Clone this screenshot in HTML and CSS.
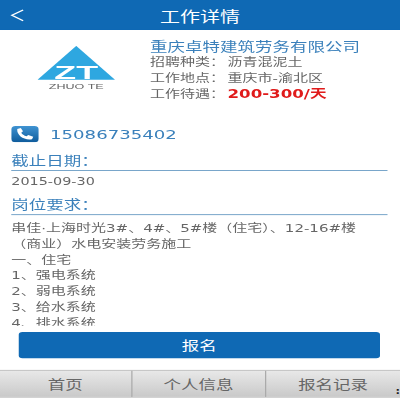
FILE: index.html
```html
<!DOCTYPE html>
<html lang="zh-CN">
<head>
  <meta charset="UTF-8">
  <meta name="viewport" content="width=device-width, initial-scale=1.0">
  <title>工作详情</title>
  <link rel="stylesheet" href="styles.css">
</head>
<body>
  <div class="frame">
    <div class="page">
      <div class="header">
        <svg class="back" width="14" height="16" viewBox="0 0 14 16"><path d="M11.5 2 L2.5 8 L11.5 14" fill="none" stroke="#fff" stroke-width="1.3"/></svg>
        <h1>工作详情</h1>
      </div>

      <div class="content">
        <div class="company">
          <svg class="logo" width="62" height="50" viewBox="0 0 62 50">
            <polygon points="31,0 62,37.5 0,37.5" fill="#2ea7e0"/>
            <text x="31" y="36.5" class="logo-zt" textLength="35" lengthAdjust="spacingAndGlyphs">ZT</text>
            <text x="31" y="48" class="logo-name" textLength="44" lengthAdjust="spacingAndGlyphs">ZHUO TE</text>
          </svg>
          <div class="company-info">
            <h2>重庆卓特建筑劳务有限公司</h2>
            <p>招聘种类：<span class="value">沥青混泥土</span></p>
            <p>工作地点：<span class="value">重庆市-渝北区</span></p>
            <p>工作待遇：<span class="value pay">200-300/天</span></p>
          </div>
        </div>

        <div class="phone">
          <svg class="phone-icon" width="22" height="18" viewBox="0 0 22 16" preserveAspectRatio="none">
            <defs>
              <linearGradient id="tile" x1="0" y1="0" x2="0" y2="1">
                <stop offset="0" stop-color="#3f93d2"/>
                <stop offset="1" stop-color="#0f5c9c"/>
              </linearGradient>
            </defs>
            <rect width="22" height="16" rx="3.5" fill="url(#tile)"/>
            <path d="M4.8 3 L7.6 2 L9.4 5.2 L8 6.6 C8.8 8.2 10.2 9.4 12.2 10 L13.6 8.8 L17.6 10.6 L16.6 13 C10.6 14.4 4.2 9.6 4.8 3 Z" fill="#fff"/>
          </svg>
          <span>15086735402</span>
        </div>

        <h3>截止日期：</h3>
        <p class="date">2015-09-30</p>
        <h3>岗位要求：</h3>
        <div class="desc">
          <p>串佳·上海时光3#、4#、5#楼（住宅）、12-16#楼</p>
          <p>（商业）水电安装劳务施工</p>
          <p>一、住宅</p>
          <p>1、强电系统</p>
          <p>2、弱电系统</p>
          <p>3、给水系统</p>
          <p>4、排水系统</p>
        </div>
      </div>

      <div class="action">
        <button type="button">报名</button>
      </div>

      <div class="tabs">
        <div class="tab">首页</div>
        <div class="tab">个人信息</div>
        <div class="tab">报名记录</div>
        <span class="edge-mark">:</span>
      </div>
    </div>
  </div>
</body>
</html>
```

FILE: styles.css
```css
* {
  box-sizing: border-box;
  margin: 0;
  padding: 0;
}

html,
body {
  height: 100%;
  overflow: hidden;
}

body {
  background: #fff;
  font-family: "DejaVu Sans", "Noto Sans CJK SC", sans-serif;
  color: #666;
}

.frame {
  width: 400px;
  height: 400px;
  overflow: hidden;
}

/* the shot is a phone page stretched wide and squeezed a little in height */
.page {
  width: 320px;
  height: 444px;
  display: flex;
  flex-direction: column;
  transform: scale(1.25, 0.9);
  transform-origin: 0 0;
  filter: blur(0.45px);
}

.header {
  height: 33.3px;
  flex: none;
  background: #0f69b4;
  display: flex;
  align-items: center;
  justify-content: center;
  position: relative;
}

.header h1 {
  font-size: 16px;
  font-weight: 400;
  color: #fff;
}

.back {
  position: absolute;
  left: 7px;
  top: 8.5px;
}

.content {
  height: 329px;
  flex: none;
  overflow: hidden;
  padding: 10.5px 10px 0 9px;
}

/* Company */
.company {
  display: flex;
  height: 94px;
}

.logo {
  margin: 7px 0 0 21px;
  flex: none;
}

.logo-zt {
  font-family: "Liberation Sans", sans-serif;
  font-size: 20px;
  font-weight: 700;
  fill: #fff;
  text-anchor: middle;
}

.logo-name {
  font-family: "Liberation Sans", sans-serif;
  font-size: 8px;
  fill: #666;
  text-anchor: middle;
}

.company-info {
  margin-left: 28px;
  font-size: 12px;
  line-height: 18px;
}

.company-info h2 {
  font-size: 14px;
  font-weight: 400;
  line-height: 16px;
  color: #3a80bb;
}

.value {
  margin-left: 2px;
}

.pay {
  font-size: 13.3px;
  font-weight: 700;
  color: #e01b1b;
}

/* Phone */
.phone {
  display: flex;
  align-items: center;
  gap: 9px;
  height: 22px;
  font-size: 14.5px;
  color: #3a80bb;
}

/* Sections */
h3 {
  font-size: 14px;
  font-weight: 400;
  line-height: 22px;
  height: 23px;
  margin-top: 7px;
  color: #3a80bb;
  border-bottom: 1px solid #6a9cc4;
}

.date {
  font-size: 11.5px;
  line-height: 25px;
}

.date + h3 {
  margin-top: 1px;
}

.desc {
  font-size: 12px;
  line-height: 17.55px;
  margin-top: 7px;
}

/* Button */
.action {
  flex: none;
  height: 48.7px;
  padding: 6.7px 16px 0 14.8px;
}

.action button {
  display: block;
  width: 100%;
  height: 28.9px;
  border: none;
  border-radius: 3px;
  background: #0f69b4;
  color: #fff;
  font-family: inherit;
  font-size: 14px;
}

/* Tabs */
.tabs {
  height: 31px;
  flex: none;
  display: flex;
  position: relative;
  background: linear-gradient(#e8e8e8, #c9c9c9);
  border-top: 1px solid #bbb;
  border-bottom: 1px solid #bbb;
}

.tab {
  width: 107.5px;
  display: flex;
  align-items: center;
  justify-content: center;
  font-size: 14px;
  color: #666;
  border-left: 1px solid #aaa;
}

.tab:first-child {
  width: 104.5px;
  border-left: none;
}

.tab:nth-child(3) {
  width: 108px;
}

/* stray mark at the right edge of the shot */
.edge-mark {
  position: absolute;
  right: 0;
  bottom: 0;
  font-size: 9px;
  font-weight: 700;
  line-height: 12px;
  color: #222;
}
```
